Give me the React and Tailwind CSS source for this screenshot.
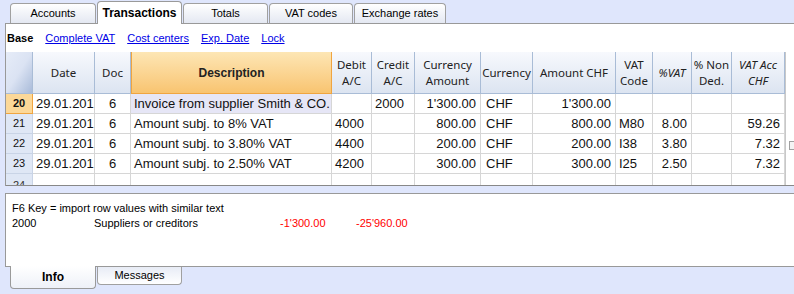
import React from 'react';

const cols =
  'grid grid-cols-[27px_62px_36px_201px_40px_43px_66px_52px_83px_37px_39px_40px_53px_30px]';

const rows = [
  { n: '20', sel: true, date: '29.01.201', doc: '6', desc: 'Invoice from supplier Smith & CO.', debit: '', credit: '2000', camt: "1'300.00", cur: 'CHF', amt: "1'300.00", code: '', pct: '', nd: '', acc: '' },
  { n: '21', date: '29.01.201', doc: '6', desc: 'Amount subj. to 8% VAT', debit: '4000', credit: '', camt: '800.00', cur: 'CHF', amt: '800.00', code: 'M80', pct: '8.00', nd: '', acc: '59.26' },
  { n: '22', date: '29.01.201', doc: '6', desc: 'Amount subj. to 3.80% VAT', debit: '4400', credit: '', camt: '200.00', cur: 'CHF', amt: '200.00', code: 'I38', pct: '3.80', nd: '', acc: '7.32', box: true },
  { n: '23', date: '29.01.201', doc: '6', desc: 'Amount subj. to 2.50% VAT', debit: '4200', credit: '', camt: '300.00', cur: 'CHF', amt: '300.00', code: 'I25', pct: '2.50', nd: '', acc: '7.32' },
];

function Tab({ label, active }) {
  if (active) {
    return (
      <div className="w-[85px] h-[23px] mb-[-1px] relative z-10 flex items-center justify-center rounded-t-[4px] border border-b-0 border-[#9a9a9a] bg-white text-[12px] font-bold text-black">
        {label}
      </div>
    );
  }
  return (
    <div className="h-[20px] flex items-center justify-center rounded-t-[4px] border border-b-0 border-[#a0a0a0] bg-gradient-to-b from-white to-[#e4e8f2] text-[11px] text-black">
      {label}
    </div>
  );
}

function H({ children, italic, className = '' }) {
  return (
    <div
      className={`flex items-center justify-center text-center leading-[16px] text-[11.5px] text-[#222] border-r border-b border-[#a9bcd6] bg-gradient-to-b from-[#f7f9fd] to-[#dce4f1] whitespace-nowrap overflow-hidden ${italic ? 'italic' : ''} ${className}`}
      style={{ fontFamily: '"Noto Sans", "DejaVu Sans", sans-serif' }}
    >
      <div>{children}</div>
    </div>
  );
}

function C({ children, align = 'left', className = '' }) {
  const a = align === 'right' ? 'justify-end pr-[4px]' : align === 'center' ? 'justify-center' : 'justify-start pl-[3px]';
  return (
    <div className={`flex items-center overflow-hidden whitespace-nowrap border-r border-b border-[#d6d6d6] ${a} ${className}`}>
      {children}
    </div>
  );
}

export default function App() {
  return (
    <div
      className="w-[794px] h-[294px] overflow-hidden bg-[#dfe6fc] flex flex-col"
      style={{ fontFamily: '"Liberation Sans", Arial, sans-serif' }}
    >
      {/* top tabs */}
      <div className="h-[23px] flex items-end gap-[1px] pl-[10px] shrink-0">
        <div className="w-[86px]"><Tab label="Accounts" /></div>
        <Tab label="Transactions" active />
        <div className="w-[85px]"><Tab label="Totals" /></div>
        <div className="w-[84px]"><Tab label="VAT codes" /></div>
        <div className="w-[92px]"><Tab label="Exchange rates" /></div>
      </div>

      {/* main panel */}
      <div className="ml-[5px] h-[163px] shrink-0 bg-white border-t border-l border-[#999] flex flex-col">
        <div className="h-[28px] flex items-center gap-3 pl-[1px] text-[11px]">
          <span className="font-bold text-black">Base</span>
          <span className="text-[#0000e6] underline">Complete VAT</span>
          <span className="text-[#0000e6] underline">Cost centers</span>
          <span className="text-[#0000e6] underline">Exp. Date</span>
          <span className="text-[#0000e6] underline">Lock</span>
        </div>

        <div className="flex-1 overflow-hidden border-b border-[#888]">
          <div className={`${cols} h-[42px]`}>
            <div className="border-r border-b border-[#a9bcd6] bg-gradient-to-br from-[#e6ecf8] via-[#dbe3f3] to-[#a9bbd9]" />
            <H>Date</H>
            <H>Doc</H>
            <div className="flex items-center justify-center text-[12px] font-bold text-[#222] border-x border-b border-[#f0a540] bg-gradient-to-b from-[#fde6b4] to-[#f8c470]">
              Description
            </div>
            <H>Debit<br />A/C</H>
            <H>Credit<br />A/C</H>
            <H>Currency<br />Amount</H>
            <H>Currency</H>
            <H>Amount CHF</H>
            <H>VAT<br />Code</H>
            <H italic>%VAT</H>
            <H>% Non<br />Ded.</H>
            <H italic>VAT Acc<br />CHF</H>
            <div className="bg-white border-l border-[#c8c8c8]" />
          </div>

          {rows.map((r) => (
            <div key={r.n} className={`${cols} h-[20px] text-[13px] text-[#111]`}>
              <div
                className={`flex items-center justify-center text-[11px] border-b ${
                  r.sel
                    ? 'bg-[#fcd898] font-bold border-r border-[#f0a540]'
                    : 'bg-[#dfe7f5] border-r border-[#c9d4e6]'
                }`}
              >
                {r.n}
              </div>
              <C>{r.date}</C>
              <C align="center">{r.doc}</C>
              <C className={r.sel ? 'bg-[#e6e6f6]' : ''}>{r.desc}</C>
              <C>{r.debit}</C>
              <C>{r.credit}</C>
              <C align="right">{r.camt}</C>
              <C className="pl-[5px]">{r.cur}</C>
              <C align="right">{r.amt}</C>
              <C>{r.code}</C>
              <C align="right">{r.pct}</C>
              <C align="right">{r.nd}</C>
              <C align="right">{r.acc}</C>
              <div className="relative border-l border-[#c8c8c8]">
                {r.box && (
                  <div className="absolute left-[3px] top-[7px] w-[8px] h-[9px] border border-[#a0a0a0] bg-[#f4f4f4]" />
                )}
              </div>
            </div>
          ))}

          <div className={`${cols} h-[12px] text-[11px]`}>
            <div className="bg-[#dfe7f5] border-r border-[#c9d4e6] flex justify-center pt-[6px] leading-none text-[#333]">24</div>
            {Array.from({ length: 12 }).map((_, i) => (
              <div key={i} className="border-r border-[#d6d6d6]" />
            ))}
            <div className="border-l border-[#c8c8c8]" />
          </div>
        </div>
      </div>

      {/* info panel */}
      <div className="mt-[7px] ml-[5px] h-[74px] shrink-0 bg-white border border-r-0 border-[#999] pt-[7px] pl-[6px] text-[11px] leading-[15px] text-black">
        <div>F6 Key = import row values with similar text</div>
        <div className="flex">
          <span className="w-[82px]">2000</span>
          <span className="w-[186px]">Suppliers or creditors</span>
          <span className="w-[76px] text-[#ff0000]">-1'300.00</span>
          <span className="text-[#ff0000]">-25'960.00</span>
        </div>
      </div>

      {/* bottom tabs */}
      <div className="flex items-start gap-[1px] pl-[10px]">
        <div className="w-[86px] h-[23px] mt-[-1px] relative z-10 flex items-center justify-center rounded-b-[4px] border border-t-0 border-[#9a9a9a] bg-gradient-to-b from-white to-[#eef1f8] text-[12px] font-bold">
          Info
        </div>
        <div className="w-[85px] h-[18px] flex items-center justify-center rounded-b-[4px] border border-t-0 border-[#a0a0a0] bg-gradient-to-b from-[#e8ecf6] to-white text-[11px]">
          Messages
        </div>
      </div>
    </div>
  );
}
